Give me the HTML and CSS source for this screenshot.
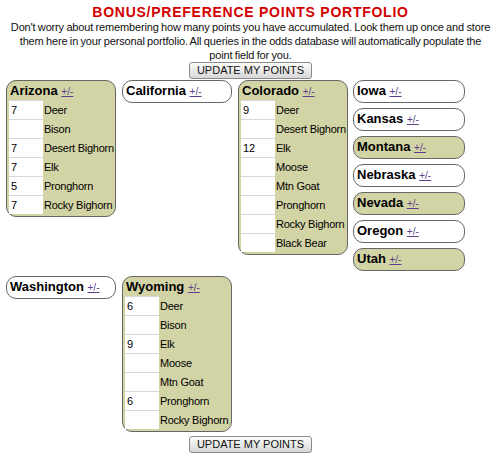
FILE: index.html
```html
<!doctype html>
<html lang="en">
<head>
    <meta charset="utf-8" />
    <title>Bonus/Preference Points Portfolio</title>
    <link rel="stylesheet" href="styles.css">
</head>
<body>
<div class="page">
    <h1>BONUS/PREFERENCE POINTS PORTFOLIO</h1>
    <p class="intro">Don't worry about remembering how many points you have accumulated. Look them up once and store them here in your personal portfolio. All queries in the odds database will automatically populate the point field for you.</p>
    <div class="actions"><button type="button">UPDATE MY POINTS</button></div>

    <div class="row">
        <div class="state">
            <div class="state-name">Arizona <a href="#">+/-</a></div>
            <div class="species"><input type="text" value="7"><span>Deer</span></div>
            <div class="species"><input type="text" value=""><span>Bison</span></div>
            <div class="species"><input type="text" value="7"><span>Desert Bighorn</span></div>
            <div class="species"><input type="text" value="7"><span>Elk</span></div>
            <div class="species"><input type="text" value="5"><span>Pronghorn</span></div>
            <div class="species"><input type="text" value="7"><span>Rocky Bighorn</span></div>
        </div>
        <div class="state closed">
            <div class="state-name">California <a href="#">+/-</a></div>
        </div>
        <div class="state">
            <div class="state-name">Colorado <a href="#">+/-</a></div>
            <div class="species"><input type="text" value="9"><span>Deer</span></div>
            <div class="species"><input type="text" value=""><span>Desert Bighorn</span></div>
            <div class="species"><input type="text" value="12"><span>Elk</span></div>
            <div class="species"><input type="text" value=""><span>Moose</span></div>
            <div class="species"><input type="text" value=""><span>Mtn Goat</span></div>
            <div class="species"><input type="text" value=""><span>Pronghorn</span></div>
            <div class="species"><input type="text" value=""><span>Rocky Bighorn</span></div>
            <div class="species"><input type="text" value=""><span>Black Bear</span></div>
        </div>
        <div class="stack">
            <div class="state closed"><div class="state-name">Iowa <a href="#">+/-</a></div></div>
            <div class="state closed"><div class="state-name">Kansas <a href="#">+/-</a></div></div>
            <div class="state"><div class="state-name">Montana <a href="#">+/-</a></div></div>
            <div class="state closed"><div class="state-name">Nebraska <a href="#">+/-</a></div></div>
            <div class="state"><div class="state-name">Nevada <a href="#">+/-</a></div></div>
            <div class="state closed"><div class="state-name">Oregon <a href="#">+/-</a></div></div>
            <div class="state"><div class="state-name">Utah <a href="#">+/-</a></div></div>
        </div>
    </div>

    <div class="row">
        <div class="state closed">
            <div class="state-name">Washington <a href="#">+/-</a></div>
        </div>
        <div class="state">
            <div class="state-name">Wyoming <a href="#">+/-</a></div>
            <div class="species"><input type="text" value="6"><span>Deer</span></div>
            <div class="species"><input type="text" value=""><span>Bison</span></div>
            <div class="species"><input type="text" value="9"><span>Elk</span></div>
            <div class="species"><input type="text" value=""><span>Moose</span></div>
            <div class="species"><input type="text" value=""><span>Mtn Goat</span></div>
            <div class="species"><input type="text" value="6"><span>Pronghorn</span></div>
            <div class="species"><input type="text" value=""><span>Rocky Bighorn</span></div>
        </div>
    </div>

    <div class="actions bottom"><button type="button">UPDATE MY POINTS</button></div>
</div>
</body>
</html>
```

FILE: styles.css
```css
body { margin:0; font-family:"Liberation Sans", Arial, sans-serif; color:#000; background:#fff; }
.page { padding:5px 5px 0 6px; }
h1 { margin:0; font-size:14px; line-height:15px; font-weight:bold; color:#d40000; text-align:center; letter-spacing:0.75px; }
.intro { margin:0 3px; font-size:11px; line-height:14px; text-align:center; color:#111; letter-spacing:-0.15px; word-spacing:-0.5px; }
.actions { text-align:center; height:17px; }
.actions.bottom { margin-top:4px; }
button {
    font-family:"Liberation Sans", Arial, sans-serif; font-size:11px; line-height:13px;
    padding:1px 7px; height:17px; color:#111; vertical-align:top;
    border:1px solid #8a8a8a; border-radius:3px;
    background:linear-gradient(#fdfdfd, #d6d6d6);
}
.row { display:flex; align-items:flex-start; gap:6px; margin-top:1px; }
.row + .row { margin-top:5px; }
.stack { display:flex; flex-direction:column; gap:5px; margin-left:-1px; }
.state {
    box-sizing:border-box; width:110px; border:1px solid #666; border-radius:10px;
    background:#d3d4a6; padding:0 1px 2px 2px;
}
.state.closed { background:#fff; }
.stack .state { width:112px; }
.state-name { font-size:13px; font-weight:bold; line-height:19px; height:19px; padding-left:1px; white-space:nowrap; overflow:hidden; }
.state-name a { font-size:10px; line-height:10px; font-weight:normal; color:#5b3f8c; }
.species { display:flex; align-items:center; height:19px; }
.species input {
    box-sizing:border-box; width:34px; height:19px; margin:0; padding:0 0 0 2px;
    border:none; border-top:1px solid #d8d8d8; background:#fff;
    font-family:"Liberation Sans", Arial, sans-serif; font-size:11px; color:#000;
}
.species:first-of-type input { border-top:none; }
.species span { font-size:11px; padding-left:1px; white-space:nowrap; letter-spacing:-0.25px; }
```
